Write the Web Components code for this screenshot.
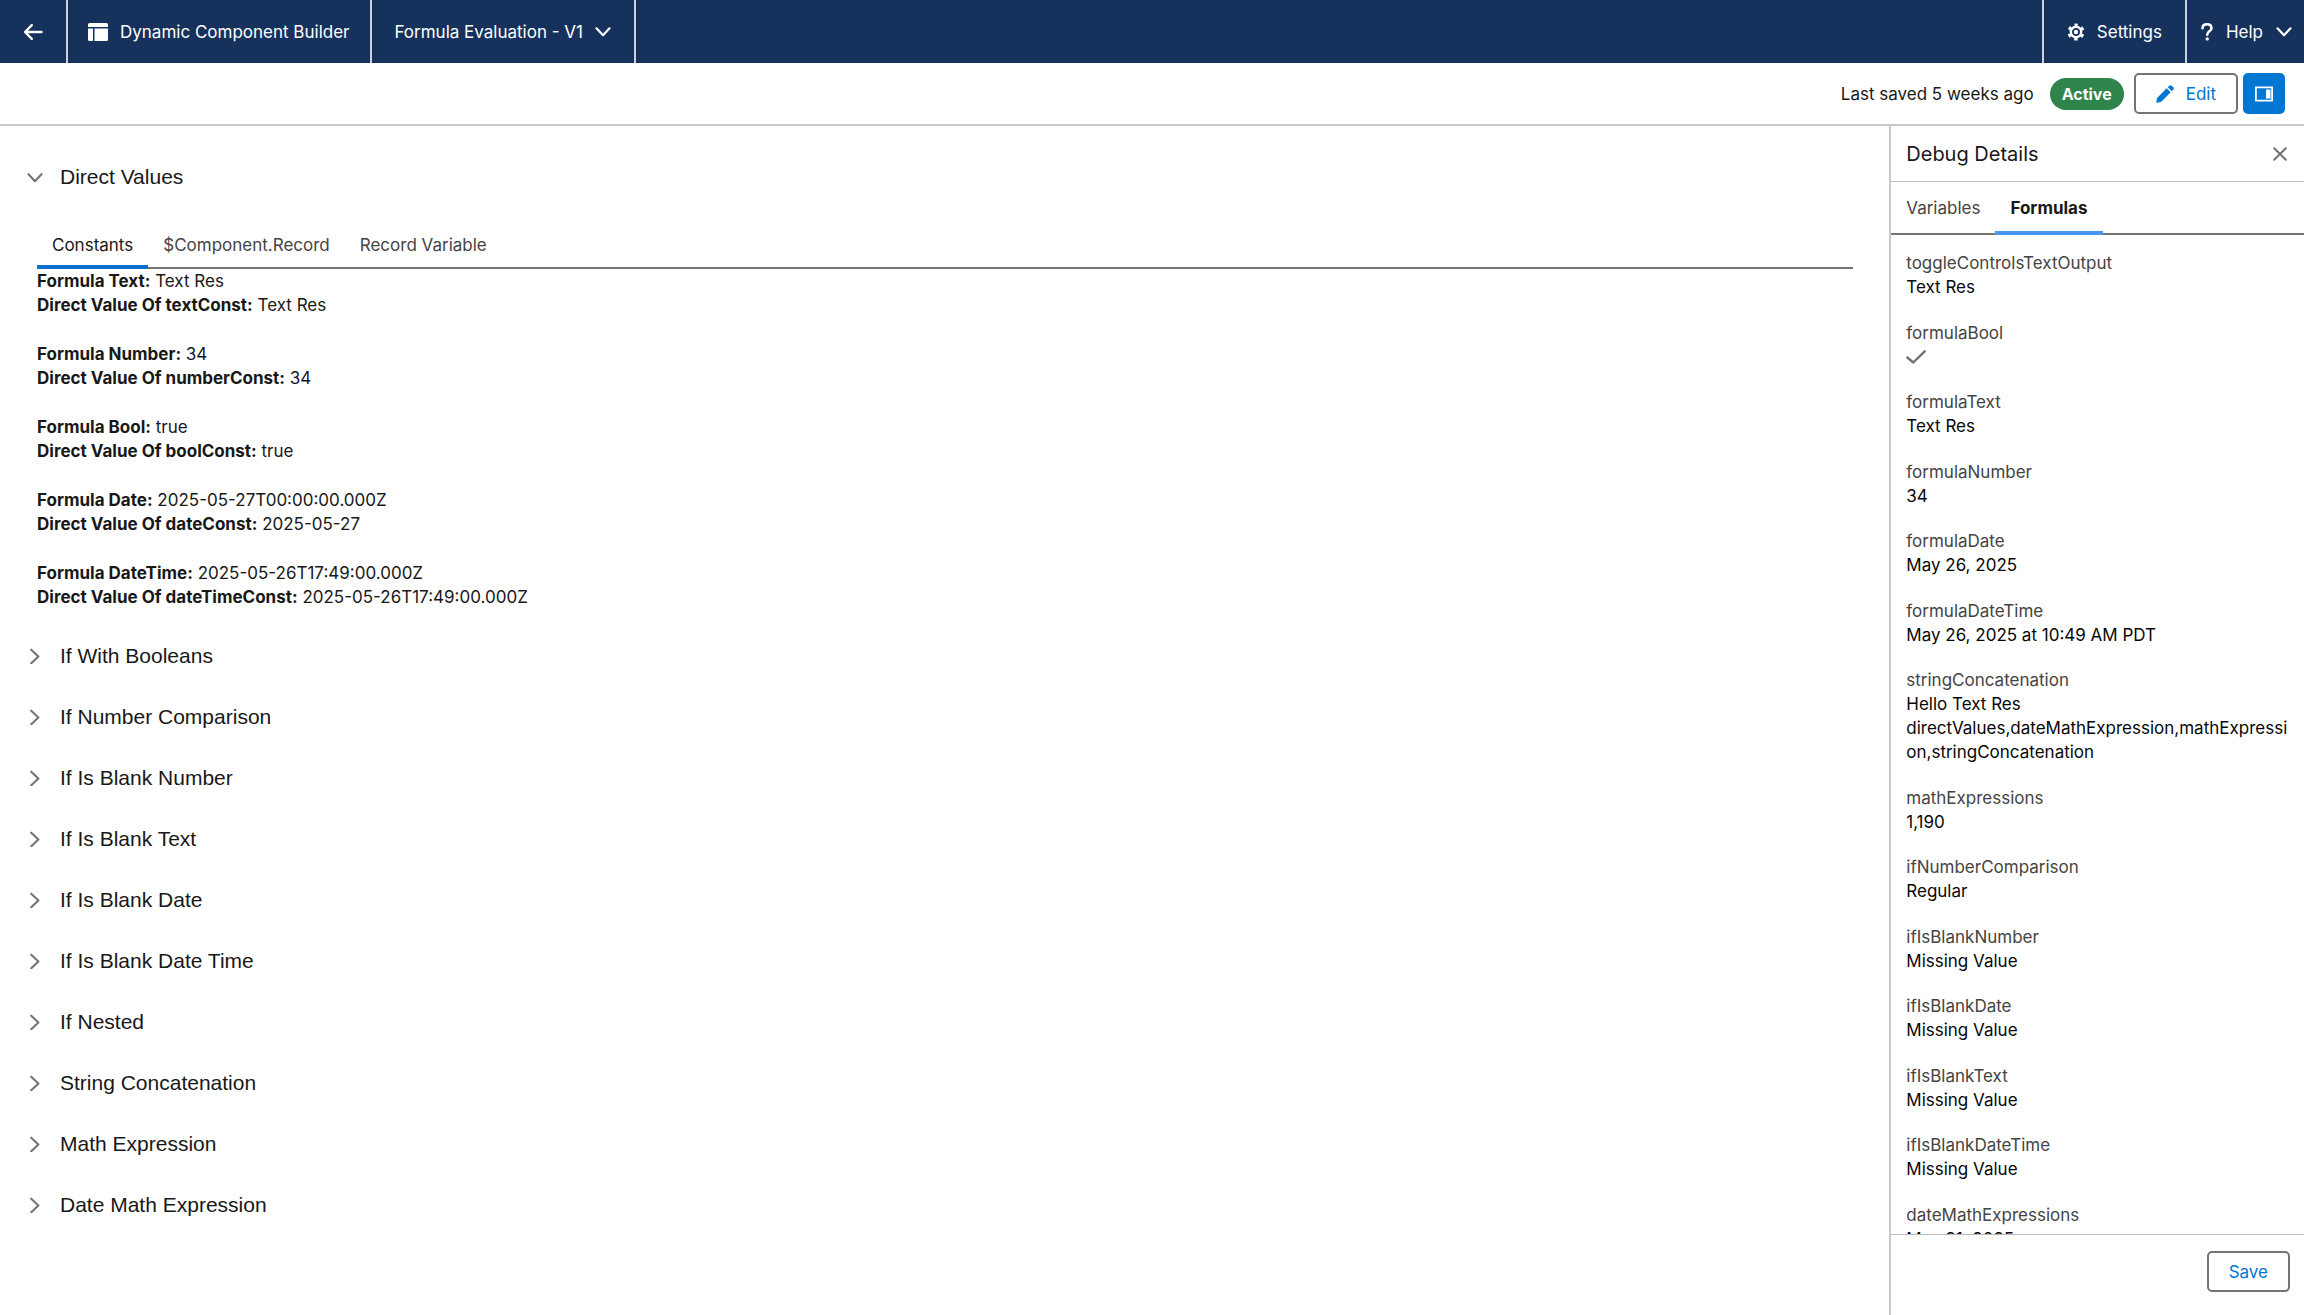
<!DOCTYPE html>
<html lang="en">
<head>
<meta charset="utf-8">
<title>Dynamic Component Builder</title>
<style>
  html, body { margin: 0; height: 100%; background: #fff; }
  body { font-family: Inter, "Liberation Sans", sans-serif; font-size: 17px; line-height: 24px; color: #181818; }
</style>
</head>
<body>
<builder-app>
  <builder-header slot="header">
    <nav-cell slot="start" icon="back" label="Back"></nav-cell>
    <nav-cell slot="start" icon="layout">Dynamic Component Builder</nav-cell>
    <nav-cell slot="start" menu>Formula Evaluation - V1</nav-cell>
    <nav-cell slot="end" icon="gear">Settings</nav-cell>
    <nav-cell slot="end" icon="help" menu compact>Help</nav-cell>
  </builder-header>

  <builder-toolbar slot="toolbar">
    <span>Last saved 5 weeks ago</span>
    <status-pill>Active</status-pill>
    <ui-button icon="edit">Edit</ui-button>
    <ui-button variant="brand" icon="panel" label="Toggle debug panel"></ui-button>
  </builder-toolbar>

  <accordion-section slot="main" heading="Direct Values" open>
    <tab-bar tabs="Constants|$Component.Record|Record Variable" active="Constants"></tab-bar>
    <value-pair>
      <value-line name="Formula Text:">Text Res</value-line>
      <value-line name="Direct Value Of textConst:">Text Res</value-line>
    </value-pair>
    <value-pair>
      <value-line name="Formula Number:">34</value-line>
      <value-line name="Direct Value Of numberConst:">34</value-line>
    </value-pair>
    <value-pair>
      <value-line name="Formula Bool:">true</value-line>
      <value-line name="Direct Value Of boolConst:">true</value-line>
    </value-pair>
    <value-pair>
      <value-line name="Formula Date:">2025-05-27T00:00:00.000Z</value-line>
      <value-line name="Direct Value Of dateConst:">2025-05-27</value-line>
    </value-pair>
    <value-pair>
      <value-line name="Formula DateTime:">2025-05-26T17:49:00.000Z</value-line>
      <value-line name="Direct Value Of dateTimeConst:">2025-05-26T17:49:00.000Z</value-line>
    </value-pair>
  </accordion-section>
  <accordion-section slot="main" heading="If With Booleans"></accordion-section>
  <accordion-section slot="main" heading="If Number Comparison"></accordion-section>
  <accordion-section slot="main" heading="If Is Blank Number"></accordion-section>
  <accordion-section slot="main" heading="If Is Blank Text"></accordion-section>
  <accordion-section slot="main" heading="If Is Blank Date"></accordion-section>
  <accordion-section slot="main" heading="If Is Blank Date Time"></accordion-section>
  <accordion-section slot="main" heading="If Nested"></accordion-section>
  <accordion-section slot="main" heading="String Concatenation"></accordion-section>
  <accordion-section slot="main" heading="Math Expression"></accordion-section>
  <accordion-section slot="main" heading="Date Math Expression"></accordion-section>

  <debug-panel slot="side" heading="Debug Details">
    <debug-field name="toggleControlsTextOutput">Text Res</debug-field>
    <debug-field name="formulaBool"><ui-icon name="check"></ui-icon></debug-field>
    <debug-field name="formulaText">Text Res</debug-field>
    <debug-field name="formulaNumber">34</debug-field>
    <debug-field name="formulaDate">May 26, 2025</debug-field>
    <debug-field name="formulaDateTime">May 26, 2025 at 10:49 AM PDT</debug-field>
    <debug-field name="stringConcatenation">Hello Text Res directValues,dateMathExpression,mathExpression,stringConcatenation</debug-field>
    <debug-field name="mathExpressions">1,190</debug-field>
    <debug-field name="ifNumberComparison">Regular</debug-field>
    <debug-field name="ifIsBlankNumber">Missing Value</debug-field>
    <debug-field name="ifIsBlankDate">Missing Value</debug-field>
    <debug-field name="ifIsBlankText">Missing Value</debug-field>
    <debug-field name="ifIsBlankDateTime">Missing Value</debug-field>
    <debug-field name="dateMathExpressions">May 31, 2025</debug-field>
    <ui-button slot="footer">Save</ui-button>
  </debug-panel>
</builder-app>

<script>
const ICONS = {
  back: [20, 20, '<path d="M18.5 10H2.500M8.800 3.200 2 10l6.800 6.800" fill="none" stroke="currentColor" stroke-width="2.4" stroke-linecap="round" stroke-linejoin="round"/>'],
  layout: [20, 18, '<path fill="currentColor" d="M1.5 0h17A1.5 1.5 0 0 1 20 1.500V4H0V1.500A1.500 1.500 0 0 1 1.500 0zM0 5.500h5V18H1.500A1.500 1.500 0 0 1 0 16.500zM6.500 5.500H20v11a1.500 1.500 0 0 1-1.500 1.500h-12z"/>'],
  gear: [18, 18, '<g fill="none" stroke="currentColor"><circle cx="9" cy="9" r="5.200" stroke-width="2.400"/><circle cx="9" cy="9" r="7.200" stroke-width="2.600" stroke-dasharray="3.400 4.140" stroke-dashoffset="1.700" transform="rotate(-90 9 9)"/></g><circle cx="9" cy="9" r="2.200" fill="currentColor"/>'],
  help: [12, 18, '<path d="M1.500 5.200C1.500 2.800 3.400 1.300 6 1.300s4.500 1.500 4.500 3.900c0 3.100-4.300 3.200-4.300 6.500" fill="none" stroke="currentColor" stroke-width="2.600" stroke-linecap="round"/><circle cx="6.200" cy="15.900" r="1.700" fill="currentColor"/>'],
  chevron: [16, 10, '<path d="M1.500 1.300 8 8.200l6.500-6.900" fill="none" stroke="currentColor" stroke-width="2.200" stroke-linecap="round" stroke-linejoin="round"/>'],
  down: [16, 16, '<path d="M1.500 5.200 8 12.200l6.500-7" fill="none" stroke="currentColor" stroke-width="2.100" stroke-linecap="round" stroke-linejoin="round"/>'],
  right: [16, 16, '<path d="M4.200 1.700 11.400 8.500l-7.200 6.800" fill="none" stroke="currentColor" stroke-width="2.100" stroke-linecap="round" stroke-linejoin="round"/>'],
  edit: [18, 18, '<path fill="currentColor" d="m10.700 3.300 4 4L5.300 16.700l-4 1c-.6.200-1.200-.4-1-1l1-4zM11.800 2.200l1.500-1.500c.7-.7 1.700-.7 2.400 0l1.600 1.600c.7.700.7 1.700 0 2.400l-1.500 1.500z"/>'],
  panel: [18, 16, '<path d="M.9 1.400h16.200v13.200H.9z" fill="none" stroke="currentColor" stroke-width="1.800"/><path d="M11 3.500h4.500v9H11z" fill="currentColor"/>'],
  close: [14, 14, '<path d="m1.200 1.200 11.600 11.600M12.800 1.200 1.200 12.800" fill="none" stroke="currentColor" stroke-width="2" stroke-linecap="round"/>'],
  check: [20, 14, '<path d="m1.300 7.500 6 5L18.700 1.300" fill="none" stroke="currentColor" stroke-width="2.400" stroke-linecap="round" stroke-linejoin="round"/>']
};
const icon = name => name ? `<ui-icon name="${name}"></ui-icon>` : '';

class Base extends HTMLElement {
  connectedCallback() {
    if (!this.shadowRoot) this.attachShadow({ mode: 'open' }).innerHTML = this.render();
  }
  attr(name) { return this.getAttribute(name) || ''; }
}

customElements.define('ui-icon', class extends Base {
  render() {
    const [w, h, body] = ICONS[this.attr('name')];
    return `<style>:host{display:inline-flex;flex:none}svg{display:block}</style>
      <svg width="${w}" height="${h}" viewBox="0 0 ${w} ${h}" aria-hidden="true">${body}</svg>`;
  }
});

customElements.define('builder-app', class extends Base {
  render() {
    return `<style>
      :host{display:flex;flex-direction:column;height:100vh;overflow:hidden}
      .body{flex:1;display:flex;min-height:0}
      main{flex:1;min-width:0;overflow:auto;padding:20px 36px 20px 24px}
    </style>
    <slot name="header"></slot><slot name="toolbar"></slot>
    <div class="body"><main><slot name="main"></slot></main><slot name="side"></slot></div>`;
  }
});

customElements.define('builder-header', class extends Base {
  render() {
    return `<style>
      :host{display:block;background:#16325c;color:#fff}
      nav{display:flex;justify-content:space-between;height:63px}
      div{display:flex}
      .start ::slotted(*){border-right:2px solid #c9d0da}
      .end ::slotted(*){border-left:2px solid #c9d0da}
    </style>
    <nav><div class="start"><slot name="start"></slot></div><div class="end"><slot name="end"></slot></div></nav>`;
  }
});

customElements.define('nav-cell', class extends Base {
  render() {
    const label = this.attr('label');
    return `<style>
      :host{display:flex}
      button{display:flex;align-items:center;gap:12px;padding:0 23px;border:0;background:none;color:inherit;font:inherit;cursor:pointer}
      :host([icon=layout]) button{padding:0 20px}
      :host([compact]) button{padding:0 12px 0 14px;gap:13px}
    </style>
    <button type="button"${label ? ` aria-label="${label}"` : ''}>${icon(this.attr('icon'))}${label ? '' : '<span><slot></slot></span>'}${this.hasAttribute('menu') ? icon('chevron') : ''}</button>`;
  }
});

customElements.define('builder-toolbar', class extends Base {
  render() {
    return `<style>
      :host{display:flex;justify-content:flex-end;align-items:center;height:61px;padding:0 19px;border-bottom:2px solid #c9c9c9}
      ::slotted(status-pill){margin:0 10px 0 16px}
      ::slotted(ui-button[variant=brand]){margin-left:5px}
    </style><slot></slot>`;
  }
});

customElements.define('status-pill', class extends Base {
  render() {
    return `<style>:host{display:inline-block;padding:4px 12px;border-radius:16px;background:#2e844a;color:#fff;font-size:16px;font-weight:700}</style><slot></slot>`;
  }
});

customElements.define('ui-button', class extends Base {
  render() {
    const label = this.attr('label');
    return `<style>
      :host{display:inline-flex}
      button{box-sizing:border-box;display:flex;align-items:center;gap:12px;height:41px;padding:0 20px;border:2px solid #747474;border-radius:5px;background:#fff;color:#0176d3;font:inherit;cursor:pointer}
      :host([variant=brand]) button{padding:0 10px;border-color:#0176d3;background:#0176d3;color:#fff}
    </style>
    <button type="button"${label ? ` aria-label="${label}"` : ''}>${icon(this.attr('icon'))}${label ? '' : '<span><slot></slot></span>'}</button>`;
  }
});

customElements.define('accordion-section', class extends Base {
  render() {
    const open = this.hasAttribute('open');
    return `<style>
      :host{display:block}
      h2{margin:0;font:inherit}
      button{display:flex;align-items:center;gap:17px;width:100%;height:61px;padding:0 3px;border:0;background:none;color:inherit;font:21px/28px "Liberation Sans",Arial,sans-serif;text-align:left;cursor:pointer}
      ui-icon{color:#747474}
      .content{padding:16px 0 16px 13px}
    </style>
    <h2><button type="button" aria-expanded="${open}">${icon(open ? 'down' : 'right')}<span>${this.attr('heading')}</span></button></h2>
    ${open ? '<div class="content"><slot></slot></div>' : ''}`;
  }
});

customElements.define('tab-bar', class extends Base {
  render() {
    const active = this.attr('active');
    return `<style>
      :host{display:block}
      div{display:flex;height:46px;box-sizing:border-box;border-bottom:2px solid #747474}
      button{box-sizing:border-box;height:46px;padding:2px 15px 0;border:0;border-bottom:4px solid transparent;background:none;color:#444;font:inherit;cursor:pointer}
      button[aria-selected=true]{border-color:var(--tab-accent,#0b6fd0);color:#181818;font-weight:var(--tab-weight,400)}
      :host([tall]) div,:host([tall]) button{height:53px}
    </style>
    <div role="tablist">${this.attr('tabs').split('|').map(t =>
      `<button type="button" role="tab" aria-selected="${t === active}">${t}</button>`).join('')}</div>`;
  }
});

customElements.define('value-pair', class extends Base {
  render() {
    return `<style>:host{display:block}:host(:not(:last-child)){margin-bottom:25px}</style><slot></slot>`;
  }
});

customElements.define('value-line', class extends Base {
  render() {
    return `<style>:host{display:block}</style><strong>${this.attr('name')}</strong> <slot></slot>`;
  }
});

customElements.define('debug-panel', class extends Base {
  render() {
    return `<style>
      :host{display:flex;flex-direction:column;box-sizing:border-box;width:18%;min-width:320px;border-left:2px solid #c9c9c9;--tab-accent:#4596f5;--tab-weight:700}
      header{display:flex;align-items:center;justify-content:space-between;height:55px;padding:0 17px 0 15px;border-bottom:1px solid #bbb}
      h2{margin:0;font-size:20px;line-height:28px;font-weight:400}
      header button{display:flex;padding:0;border:0;background:none;color:#747474;cursor:pointer}
      .fields{flex:1;min-height:0;overflow:hidden;padding:16px 15px 0}
      ::slotted(debug-field){margin-bottom:21px}
      ::slotted(debug-field:nth-child(odd)){margin-bottom:22px}
      footer{display:flex;justify-content:flex-end;padding:16px 14px 23px;border-top:1px solid #bbb}
    </style>
    <header><h2>${this.attr('heading')}</h2><button type="button" aria-label="Close">${icon('close')}</button></header>
    <tab-bar tall tabs="Variables|Formulas" active="Formulas"></tab-bar>
    <div class="fields"><slot></slot></div>
    <footer><slot name="footer"></slot></footer>`;
  }
});

customElements.define('debug-field', class extends Base {
  render() {
    return `<style>
      :host{display:block}
      dl,dd{margin:0}
      dt{color:#444}
      dd{display:block;min-height:24px;color:#080707;overflow-wrap:anywhere}
      ::slotted(ui-icon){height:24px;align-items:center;vertical-align:top;color:#747474}
    </style>
    <dl><dt>${this.attr('name')}</dt><dd><slot></slot></dd></dl>`;
  }
});
</script>
</body>
</html>
